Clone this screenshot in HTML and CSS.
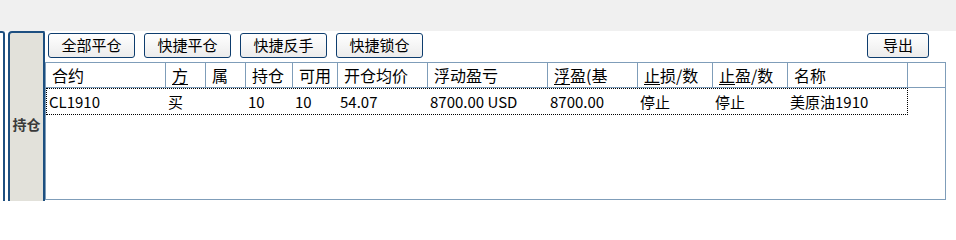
FILE: index.html
```html
<!DOCTYPE html>
<html lang="zh">
<head>
<meta charset="utf-8">
<link rel="stylesheet" href="styles.css">
</head>
<body>
<div class="topbar"></div>
<div class="main">
  <div class="stub"></div>
  <div class="tab"><span class="tab-label">持仓</span></div>
  <div class="content">
    <div class="toolbar">
      <button class="btn">全部平仓</button>
      <button class="btn">快捷平仓</button>
      <button class="btn">快捷反手</button>
      <button class="btn">快捷锁仓</button>
      <button class="btn btn-export">导出</button>
    </div>
    <div class="grid">
      <div class="head">
        <div class="hc w120">合约</div>
        <div class="hc w40"><span class="acc">方</span></div>
        <div class="hc w40">属</div>
        <div class="hc w47">持仓</div>
        <div class="hc w45">可用</div>
        <div class="hc w90">开仓均价</div>
        <div class="hc w120">浮动盈亏</div>
        <div class="hc w90"><span class="acc">浮</span>盈(基</div>
        <div class="hc w75"><span class="acc">止</span>损/数</div>
        <div class="hc w75"><span class="acc">止</span>盈/数</div>
        <div class="hc w120">名称</div>
        <div class="hc filler"></div>
      </div>
      <div class="row">
        <div class="dc w119">CL1910</div>
        <div class="dc w40">买</div>
        <div class="dc w40"></div>
        <div class="dc w47">10</div>
        <div class="dc w45">10</div>
        <div class="dc w90">54.07</div>
        <div class="dc w120">8700.00 USD</div>
        <div class="dc w90">8700.00</div>
        <div class="dc w75">停止</div>
        <div class="dc w75">停止</div>
        <div class="dc w119">美原油1910</div>
      </div>
    </div>
  </div>
</div>
</body>
</html>
```
FILE: styles.css
```css
html, body {
  margin: 0;
  padding: 0;
  background: #ffffff;
}
body {
  width: 956px;
  height: 201px;
  overflow: hidden;
  font-family: "Noto Sans CJK SC", "Liberation Sans", sans-serif;
  color: #000;
}
.topbar {
  height: 31px;
  background: #f0f0f0;
}
.main {
  display: flex;
  height: 170px;
}
.stub {
  box-sizing: border-box;
  width: 5px;
  height: 170px;
  border-top: 2px solid #1d4f80;
  border-right: 2px solid #1d4f80;
  border-top-right-radius: 3px;
  margin-right: 3px;
}
.tab {
  box-sizing: border-box;
  width: 37px;
  height: 170px;
  background: #e2e1da;
  border: 2px solid #1d4f80;
  border-bottom: none;
  border-top-left-radius: 4px;
  border-top-right-radius: 2px;
  display: flex;
  justify-content: center;
  align-items: flex-start;
  padding-top: 83px;
}
.tab-label {
  font-size: 14px;
  font-weight: bold;
  line-height: 17px;
  color: #3a3a3a;
  white-space: nowrap;
}
.content {
  flex: 1;
  display: flex;
  flex-direction: column;
}
.toolbar {
  display: flex;
  gap: 9px;
  padding-left: 3px;
  padding-right: 27px;
  margin-top: 2px;
  height: 25px;
}
.btn {
  box-sizing: border-box;
  width: 87px;
  height: 25px;
  padding: 0 0 2px 0;
  border: 1px solid #0e3d6e;
  border-radius: 3px;
  background: linear-gradient(#ffffff, #ececec);
  font-family: "Noto Sans CJK SC", sans-serif;
  font-size: 15px;
  line-height: 18px;
  color: #000;
}
.btn-export {
  width: 62px;
  margin-left: auto;
}
.grid {
  box-sizing: border-box;
  margin-top: 4px;
  width: 901px;
  height: 138px;
  border: 1px solid #7f9db9;
  font-size: 15px;
  line-height: 18px;
}
.head {
  display: flex;
  height: 25px;
  box-sizing: border-box;
  border-bottom: 1px solid #7f9db9;
  font-size: 16px;
}
.hc {
  box-sizing: border-box;
  height: 24px;
  border-right: 1px solid #7f9db9;
  padding-left: 6px;
  display: flex;
  align-items: center;
  white-space: nowrap;
  overflow: hidden;
}
.hc.filler {
  flex: 1;
  border-right: none;
}
.acc {
  text-decoration: underline;
  text-underline-offset: 2px;
}
.row {
  box-sizing: border-box;
  display: flex;
  width: 862px;
  height: 27px;
  border: 1px dotted #000;
}
.dc {
  box-sizing: border-box;
  padding-left: 2px;
  display: flex;
  align-items: center;
  white-space: nowrap;
  overflow: hidden;
}
.w119 { width: 119px; }
.w120 { width: 120px; }
.w40 { width: 40px; }
.w47 { width: 47px; }
.w45 { width: 45px; }
.w90 { width: 90px; }
.w75 { width: 75px; }
```
